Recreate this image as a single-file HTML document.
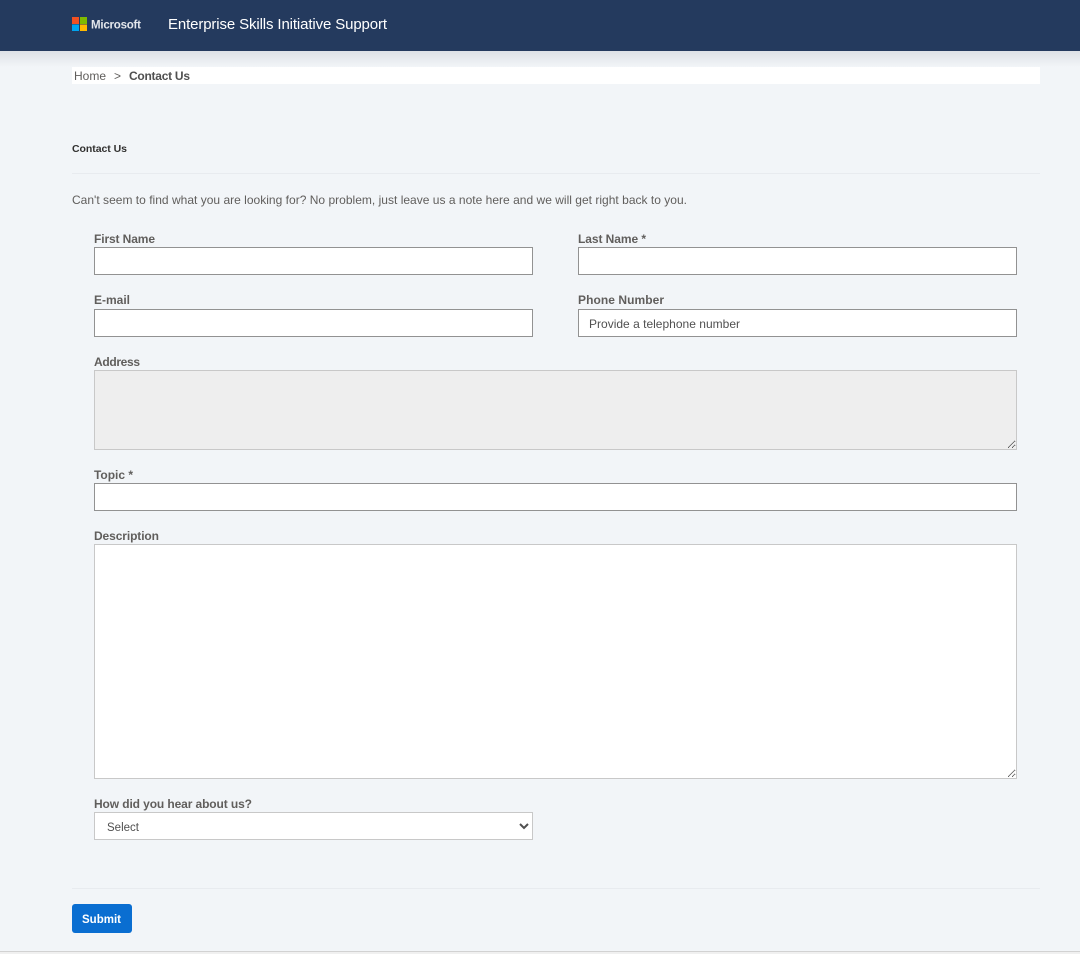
<!DOCTYPE html>
<html lang="en">
<head>
<meta charset="utf-8">
<title>Contact Us</title>
<style>
html,body{margin:0;padding:0;width:1080px;height:954px;overflow:hidden;background:#f2f5f8;font-family:"Liberation Sans",sans-serif}
.a{position:absolute;box-sizing:border-box;display:block;margin:0}
header{left:0;top:0;width:1080px;height:51px;background:#243a5e}
.shadow{left:0;top:51px;width:1080px;height:16px;background:linear-gradient(#dde1e6,#f2f5f8)}
.crumb{left:72px;top:67px;width:968px;height:17px;background:#fff}
.hr{left:72px;width:968px;height:1px;background:#e8ebef}
input,textarea{background:#fff;border:1px solid #929292;border-radius:0;outline:none;padding:0}
textarea.soft{border-color:#c8c8c8}
textarea[disabled]{background:#eee}
select{background:#fff;border:1px solid #c8c8c8;border-radius:0;font:11.500px "Liberation Sans",sans-serif;color:#505050;padding:3px 0 0 8px;outline:none}
.btn{left:72px;top:904px;width:60px;height:29px;background:#0a6ed1;border:0;border-radius:3px}
.foot{left:0;top:951px;width:1080px;height:1px;background:#d2d2d2}
.foot2{left:0;top:952px;width:1080px;height:2px;background:#f0f0f0}
svg.t{position:absolute;left:0;top:0;pointer-events:none}
svg.t text{font-family:"Liberation Sans",sans-serif;font-size:12px;fill:#605e5c}
svg.t .b{font-weight:bold}
</style>
</head>
<body>
<header class="a"></header>
<div class="a shadow"></div>
<div class="a crumb"></div>
<div class="a hr" style="top:173px"></div>

<input class="a" style="left:94px;top:247px;width:439px;height:28px">
<input class="a" style="left:578px;top:247px;width:439px;height:28px">
<input class="a" style="left:94px;top:309px;width:439px;height:28px">
<input class="a" style="left:578px;top:309px;width:439px;height:28px">
<textarea class="a soft" disabled style="left:94px;top:370px;width:923px;height:80px"></textarea>
<input class="a" style="left:94px;top:483px;width:923px;height:28px">
<textarea class="a soft" style="left:94px;top:544px;width:923px;height:235px"></textarea>
<select class="a" style="left:94px;top:812px;width:439px;height:28px"><option>Select</option></select>

<div class="a hr" style="top:888px"></div>
<div class="a btn"></div>
<div class="a foot"></div>
<div class="a foot2"></div>

<svg class="t" width="1080" height="954" viewBox="0 0 1080 954" xmlns="http://www.w3.org/2000/svg">
  <rect x="72" y="17" width="7" height="7" fill="#f25022"/>
  <rect x="80" y="17" width="7" height="7" fill="#7fba00"/>
  <rect x="72" y="24.500" width="7" height="6.500" fill="#00a4ef"/>
  <rect x="80" y="24.500" width="7" height="6.500" fill="#ffb900"/>
  <text x="91" y="28.500" class="b" textLength="50" style="font-size:11.500px;fill:#e4e7ec">Microsoft</text>
  <text x="168" y="29" textLength="219" style="font-size:15px;fill:#fff">Enterprise Skills Initiative Support</text>

  <text x="74" y="80" textLength="32">Home</text>
  <text x="114" y="80" textLength="7">&gt;</text>
  <text x="129" y="80" class="b" textLength="61" style="fill:#505050">Contact Us</text>

  <text x="72" y="152" class="b" textLength="55" style="font-size:10.500px;fill:#323130">Contact Us</text>
  <text x="72" y="204" textLength="615">Can't seem to find what you are looking for? No problem, just leave us a note here and we will get right back to you.</text>

  <text x="94" y="243" class="b" textLength="61">First Name</text>
  <text x="578" y="243" class="b" textLength="68">Last Name *</text>
  <text x="94" y="304" class="b" textLength="36">E-mail</text>
  <text x="578" y="304" class="b" textLength="86">Phone Number</text>
  <text x="589" y="328" textLength="151" style="fill:#505050">Provide a telephone number</text>
  <text x="94" y="366" class="b" textLength="46">Address</text>
  <text x="94" y="479" class="b" textLength="39">Topic *</text>
  <text x="94" y="540" class="b" textLength="65">Description</text>
  <text x="94" y="808" class="b" textLength="158">How did you hear about us?</text>

  <text x="82" y="923" class="b" textLength="39" style="font-size:11.500px;fill:#fff">Submit</text>
</svg>
</body>
</html>
